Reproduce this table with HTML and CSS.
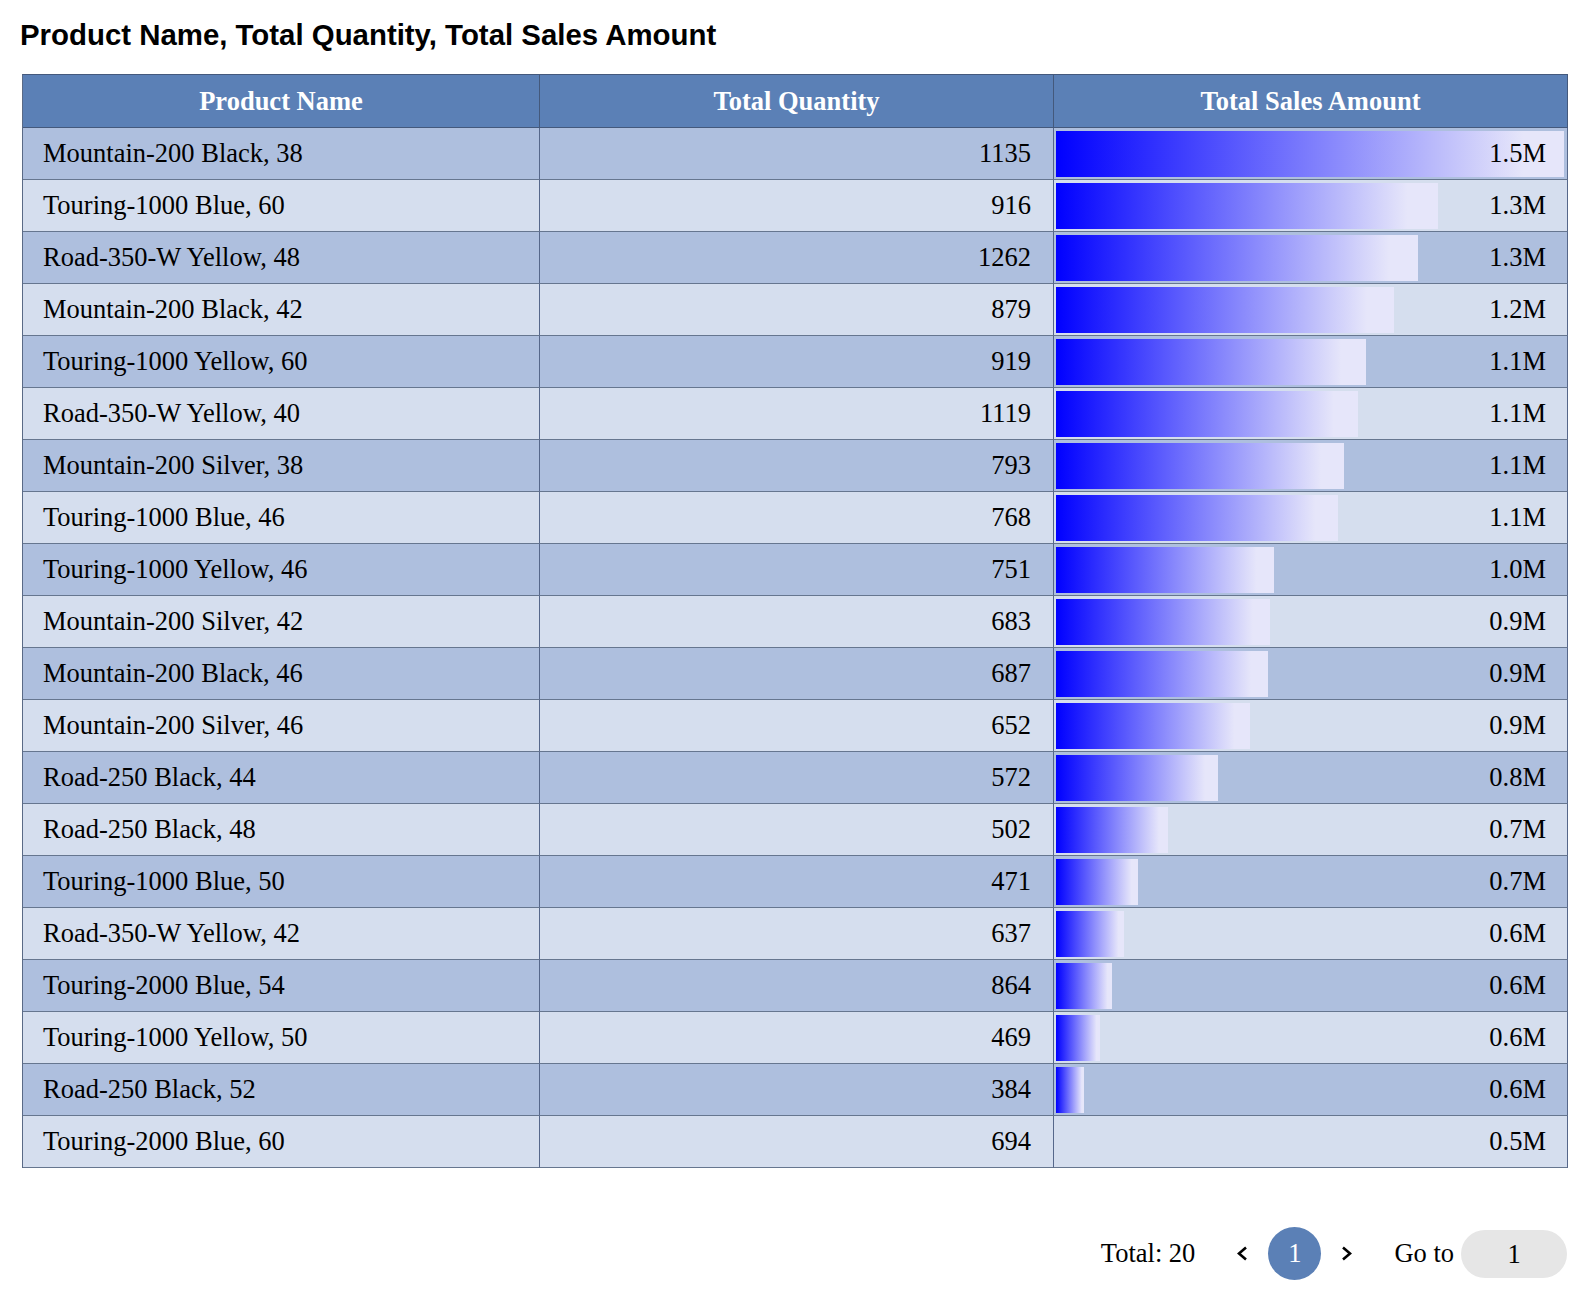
FILE: index.html
```html
<!DOCTYPE html>
<html lang="en">
<head>
<meta charset="utf-8">
<title>Product Name, Total Quantity, Total Sales Amount</title>
<link rel="stylesheet" href="styles.css">
</head>
<body>
<div class="page">
  <h1 class="title">Product Name, Total Quantity, Total Sales Amount</h1>
  <table class="grid">
    <colgroup>
      <col class="c-name">
      <col class="c-qty">
      <col class="c-sales">
    </colgroup>
    <thead>
      <tr>
        <th><div class="cell">Product Name</div></th>
        <th><div class="cell">Total Quantity</div></th>
        <th><div class="cell">Total Sales Amount</div></th>
      </tr>
    </thead>
    <tbody>
      <tr><td><div class="cell name">Mountain-200 Black, 38</div></td><td><div class="cell num">1135</div></td><td><div class="cell sales"><span class="bar" style="width:508px"></span><span class="val">1.5M</span></div></td></tr>
      <tr><td><div class="cell name">Touring-1000 Blue, 60</div></td><td><div class="cell num">916</div></td><td><div class="cell sales"><span class="bar" style="width:382px"></span><span class="val">1.3M</span></div></td></tr>
      <tr><td><div class="cell name">Road-350-W Yellow, 48</div></td><td><div class="cell num">1262</div></td><td><div class="cell sales"><span class="bar" style="width:362px"></span><span class="val">1.3M</span></div></td></tr>
      <tr><td><div class="cell name">Mountain-200 Black, 42</div></td><td><div class="cell num">879</div></td><td><div class="cell sales"><span class="bar" style="width:338px"></span><span class="val">1.2M</span></div></td></tr>
      <tr><td><div class="cell name">Touring-1000 Yellow, 60</div></td><td><div class="cell num">919</div></td><td><div class="cell sales"><span class="bar" style="width:310px"></span><span class="val">1.1M</span></div></td></tr>
      <tr><td><div class="cell name">Road-350-W Yellow, 40</div></td><td><div class="cell num">1119</div></td><td><div class="cell sales"><span class="bar" style="width:302px"></span><span class="val">1.1M</span></div></td></tr>
      <tr><td><div class="cell name">Mountain-200 Silver, 38</div></td><td><div class="cell num">793</div></td><td><div class="cell sales"><span class="bar" style="width:288px"></span><span class="val">1.1M</span></div></td></tr>
      <tr><td><div class="cell name">Touring-1000 Blue, 46</div></td><td><div class="cell num">768</div></td><td><div class="cell sales"><span class="bar" style="width:282px"></span><span class="val">1.1M</span></div></td></tr>
      <tr><td><div class="cell name">Touring-1000 Yellow, 46</div></td><td><div class="cell num">751</div></td><td><div class="cell sales"><span class="bar" style="width:218px"></span><span class="val">1.0M</span></div></td></tr>
      <tr><td><div class="cell name">Mountain-200 Silver, 42</div></td><td><div class="cell num">683</div></td><td><div class="cell sales"><span class="bar" style="width:214px"></span><span class="val">0.9M</span></div></td></tr>
      <tr><td><div class="cell name">Mountain-200 Black, 46</div></td><td><div class="cell num">687</div></td><td><div class="cell sales"><span class="bar" style="width:212px"></span><span class="val">0.9M</span></div></td></tr>
      <tr><td><div class="cell name">Mountain-200 Silver, 46</div></td><td><div class="cell num">652</div></td><td><div class="cell sales"><span class="bar" style="width:194px"></span><span class="val">0.9M</span></div></td></tr>
      <tr><td><div class="cell name">Road-250 Black, 44</div></td><td><div class="cell num">572</div></td><td><div class="cell sales"><span class="bar" style="width:162px"></span><span class="val">0.8M</span></div></td></tr>
      <tr><td><div class="cell name">Road-250 Black, 48</div></td><td><div class="cell num">502</div></td><td><div class="cell sales"><span class="bar" style="width:112px"></span><span class="val">0.7M</span></div></td></tr>
      <tr><td><div class="cell name">Touring-1000 Blue, 50</div></td><td><div class="cell num">471</div></td><td><div class="cell sales"><span class="bar" style="width:82px"></span><span class="val">0.7M</span></div></td></tr>
      <tr><td><div class="cell name">Road-350-W Yellow, 42</div></td><td><div class="cell num">637</div></td><td><div class="cell sales"><span class="bar" style="width:68px"></span><span class="val">0.6M</span></div></td></tr>
      <tr><td><div class="cell name">Touring-2000 Blue, 54</div></td><td><div class="cell num">864</div></td><td><div class="cell sales"><span class="bar" style="width:56px"></span><span class="val">0.6M</span></div></td></tr>
      <tr><td><div class="cell name">Touring-1000 Yellow, 50</div></td><td><div class="cell num">469</div></td><td><div class="cell sales"><span class="bar" style="width:44px"></span><span class="val">0.6M</span></div></td></tr>
      <tr><td><div class="cell name">Road-250 Black, 52</div></td><td><div class="cell num">384</div></td><td><div class="cell sales"><span class="bar" style="width:28px"></span><span class="val">0.6M</span></div></td></tr>
      <tr><td><div class="cell name">Touring-2000 Blue, 60</div></td><td><div class="cell num">694</div></td><td><div class="cell sales"><span class="val">0.5M</span></div></td></tr>
    </tbody>
  </table>

  <nav class="pager">
    <span class="pager-total">Total: 20</span>
    <span class="pager-arrow prev">
      <svg width="12" height="15" viewBox="0 0 12 15"><polyline points="10,1.5 3,7.5 10,13.5" fill="none" stroke="#000" stroke-width="2.6"/></svg>
    </span>
    <span class="pager-page">1</span>
    <span class="pager-arrow next">
      <svg width="12" height="15" viewBox="0 0 12 15"><polyline points="2,1.5 9,7.5 2,13.5" fill="none" stroke="#000" stroke-width="2.6"/></svg>
    </span>
    <span class="pager-goto">Go to</span>
    <span class="pager-input">1</span>
  </nav>
</div>
</body>
</html>
```

FILE: styles.css
```css
html, body {
  margin: 0;
  padding: 0;
  background: #ffffff;
}

.page {
  padding: 18px 19px 40px 22px;
  font-family: "Liberation Serif", "Times New Roman", serif;
  color: #000;
}

.title {
  margin: 0 0 23px -2px;
  font-family: "Liberation Sans", Arial, sans-serif;
  font-weight: bold;
  font-size: 29.4px;
  line-height: 33px;
  color: #000;
}

.grid {
  width: 1545px;
  table-layout: fixed;
  border-collapse: separate;
  border-spacing: 0;
  border-top: 1px solid #44597c;
  border-left: 1px solid #5a6a86;
}

.c-name { width: 517px; }
.c-qty { width: 514px; }
.c-sales { width: 514px; }

.grid th,
.grid td {
  padding: 0;
  border-right: 1px solid #56678a;
  border-bottom: 1px solid #66768f;
}

.grid th {
  background: #5b80b6;
  border-bottom-color: #44597c;
  border-right-color: #44597c;
}

.cell {
  height: 51px;
  line-height: 51px;
  font-size: 26.5px;
  white-space: nowrap;
}

.grid th .cell {
  color: #ffffff;
  font-weight: bold;
  text-align: center;
  height: 52px;
  line-height: 52px;
}

.grid tbody tr:nth-child(odd) td { background: #aebfde; }
.grid tbody tr:nth-child(even) td { background: #d5deee; }

.name {
  padding-left: 20px;
  text-align: left;
}

.num {
  padding-right: 22px;
  text-align: right;
}

.sales {
  position: relative;
  padding-right: 21px;
  text-align: right;
}

.bar {
  position: absolute;
  left: 2px;
  top: 3px;
  height: 46px;
  background: linear-gradient(to right, #0000ff 0%, #e6e6fa 92%, #e6e6fa 100%);
}

.val {
  position: relative;
}

.pager {
  margin-top: 59px;
  display: flex;
  justify-content: flex-end;
  align-items: center;
  height: 53px;
  font-size: 26.5px;
}

.pager-total {
  margin-right: 41px;
}

.pager-arrow {
  display: flex;
  align-items: center;
  width: 12px;
  height: 15px;
}

.pager-page {
  width: 53px;
  height: 53px;
  margin: 0 20px;
  border-radius: 50%;
  background: #5b80b6;
  color: #ffffff;
  text-align: center;
  line-height: 53px;
}

.pager-goto {
  margin-left: 41px;
  margin-right: 7px;
}

.pager-input {
  width: 106px;
  height: 48px;
  border-radius: 24px;
  background: #e6e6e6;
  text-align: center;
  line-height: 48px;
}
```
